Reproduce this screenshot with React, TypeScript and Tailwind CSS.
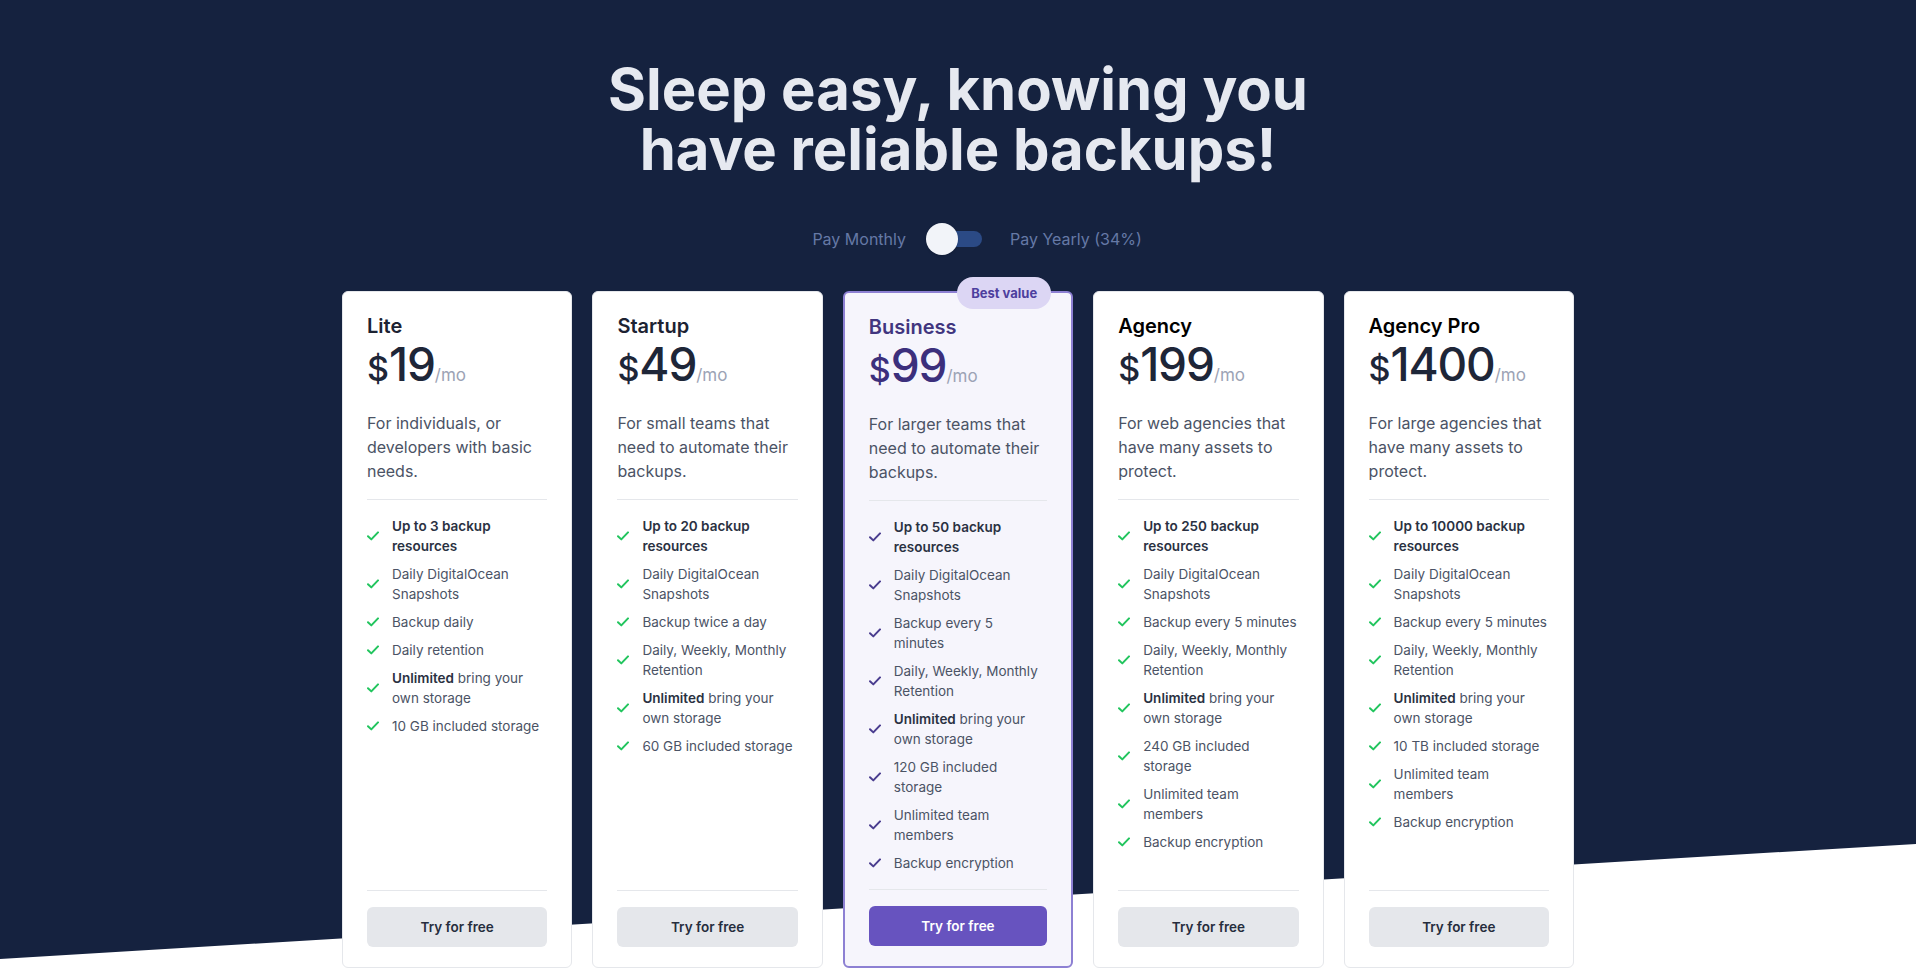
import { Fragment } from 'react';

type Feature = { bold?: string; text?: string };

interface Plan {
  name: string;
  price: string;
  desc: string;
  features: Feature[];
  featured?: boolean;
  blackTitle?: boolean;
}

const plans: Plan[] = [
  {
    name: 'Lite',
    price: '19',
    desc: 'For individuals, or developers with basic needs.',
    features: [
      { bold: 'Up to 3 backup resources' },
      { text: 'Daily DigitalOcean Snapshots' },
      { text: 'Backup daily' },
      { text: 'Daily retention' },
      { bold: 'Unlimited', text: ' bring your own storage' },
      { text: '10 GB included storage' },
    ],
  },
  {
    name: 'Startup',
    price: '49',
    desc: 'For small teams that need to automate their backups.',
    features: [
      { bold: 'Up to 20 backup resources' },
      { text: 'Daily DigitalOcean Snapshots' },
      { text: 'Backup twice a day' },
      { text: 'Daily, Weekly, Monthly Retention' },
      { bold: 'Unlimited', text: ' bring your own storage' },
      { text: '60 GB included storage' },
    ],
  },
  {
    name: 'Business',
    price: '99',
    desc: 'For larger teams that need to automate their backups.',
    featured: true,
    features: [
      { bold: 'Up to 50 backup resources' },
      { text: 'Daily DigitalOcean Snapshots' },
      { text: 'Backup every 5 minutes' },
      { text: 'Daily, Weekly, Monthly Retention' },
      { bold: 'Unlimited', text: ' bring your own storage' },
      { text: '120 GB included storage' },
      { text: 'Unlimited team members' },
      { text: 'Backup encryption' },
    ],
  },
  {
    name: 'Agency',
    price: '199',
    desc: 'For web agencies that have many assets to protect.',
    blackTitle: true,
    features: [
      { bold: 'Up to 250 backup resources' },
      { text: 'Daily DigitalOcean Snapshots' },
      { text: 'Backup every 5 minutes' },
      { text: 'Daily, Weekly, Monthly Retention' },
      { bold: 'Unlimited', text: ' bring your own storage' },
      { text: '240 GB included storage' },
      { text: 'Unlimited team members' },
      { text: 'Backup encryption' },
    ],
  },
  {
    name: 'Agency Pro',
    price: '1400',
    desc: 'For large agencies that have many assets to protect.',
    blackTitle: true,
    features: [
      { bold: 'Up to 10000 backup resources' },
      { text: 'Daily DigitalOcean Snapshots' },
      { text: 'Backup every 5 minutes' },
      { text: 'Daily, Weekly, Monthly Retention' },
      { bold: 'Unlimited', text: ' bring your own storage' },
      { text: '10 TB included storage' },
      { text: 'Unlimited team members' },
      { text: 'Backup encryption' },
    ],
  },
];

function CheckMark({ className }: { className: string }) {
  return (
    <svg viewBox="0 0 12 10" fill="none" className={className}>
      <polyline points="1 5.2 4.3 8.4 11 1.4" stroke="currentColor" strokeWidth="2" strokeLinecap="round" strokeLinejoin="round" />
    </svg>
  );
}

function PlanCard({ plan }: { plan: Plan }) {
  const featured = plan.featured;
  return (
    <div
      className={
        featured
          ? 'relative flex flex-col rounded-md border-2 border-[#8d80d3] bg-[#f6f5fc] px-6 pt-5 pb-5'
          : 'relative flex flex-col rounded-md border border-[#e5e7eb] bg-white px-6 pt-5 pb-5'
      }
    >
      {featured && (
        <span className="absolute right-5 top-[-16px] rounded-full bg-[#dcd6f4] px-3.5 py-[7px] text-[13px] font-bold leading-[18px] text-[#4d3f9e]">
          Best value
        </span>
      )}

      {/* Header */}
      <h3
        className={
          featured
            ? 'text-[20px] font-semibold leading-7 text-[#41357f]'
            : plan.blackTitle
              ? 'text-[20px] font-semibold leading-7 text-black'
              : 'text-[20px] font-semibold leading-7 text-[#1c2232]'
        }
      >
        {plan.name}
      </h3>
      <div className={featured ? 'flex items-baseline text-[#3c2f7c]' : 'flex items-baseline text-[#1e2638]'}>
        <span className="text-[34px] font-medium leading-[48px]">$</span>
        <span className="text-[46px] font-medium leading-[48px] tracking-tight">{plan.price}</span>
        <span className="text-[17px] text-[#9ca3b5]">/mo</span>
      </div>
      <p className="mt-[18px] text-base leading-6 text-[#4b5365]">{plan.desc}</p>

      {/* Features */}
      <ul className="mt-4 flex flex-col gap-2 border-t border-[#e5e7eb] pt-4">
        {plan.features.map((f, i) => (
          <li
            key={i}
            className={
              featured
                ? 'flex items-center gap-[13px] pr-[2px] text-[13.5px] leading-5 text-[#4b5365]'
                : 'flex items-center gap-[13px] text-[13.5px] leading-5 text-[#4b5365]'
            }
          >
            <CheckMark className={featured ? 'h-2.5 w-3 shrink-0 text-[#4a3d8f]' : 'h-2.5 w-3 shrink-0 text-[#22c55e]'} />
            <span>
              {f.bold && <b className="font-semibold text-[#2a3142]">{f.bold}</b>}
              {f.text && <Fragment>{f.text}</Fragment>}
            </span>
          </li>
        ))}
      </ul>

      {/* Footer */}
      <div className="mt-auto pt-4">
        <div className="border-t border-[#e5e7eb] pt-4">
          <button
            className={
              featured
                ? 'h-10 w-full rounded-md bg-[#6753bf] text-[13.5px] font-semibold text-white'
                : 'h-10 w-full rounded-md bg-[#e5e7eb] text-[13.5px] font-semibold text-[#262d3d]'
            }
          >
            Try for free
          </button>
        </div>
      </div>
    </div>
  );
}

export default function App() {
  return (
    <div className="min-h-screen bg-white [font-family:Inter,'Noto_Sans',sans-serif]">
      <section className="relative pb-24">
        {/* Slanted navy backdrop */}
        <div className="absolute inset-x-0 top-0 h-[959px] bg-[#15223f] [clip-path:polygon(0_0,100%_0,100%_88%,0_100%)]" />

        <div className="relative pt-[59px]">
          <h1 className="mx-auto max-w-[760px] text-center text-[58px] font-bold leading-[60px] text-[#e6e9f0]">
            Sleep easy, knowing you have reliable backups!
          </h1>

          {/* Billing toggle */}
          <div className="mt-[44px] grid grid-cols-[1fr_auto_1fr] items-center gap-5 text-base text-[#6579a6]">
            <span className="text-right">Pay Monthly</span>
            <div className="relative h-8 w-16">
              <div className="absolute left-0.5 right-2 top-2 h-4 rounded-full bg-[#2b4a85]" />
              <div className="absolute left-0 top-0 h-8 w-8 rounded-full bg-[#f2f4f9] shadow" />
            </div>
            <span>Pay Yearly (34%)</span>
          </div>

          {/* Plans */}
          <div className="mx-auto mt-[36px] grid w-[1232px] grid-cols-5 gap-5">
            {plans.map((p) => (
              <PlanCard key={p.name} plan={p} />
            ))}
          </div>
        </div>
      </section>
    </div>
  );
}
